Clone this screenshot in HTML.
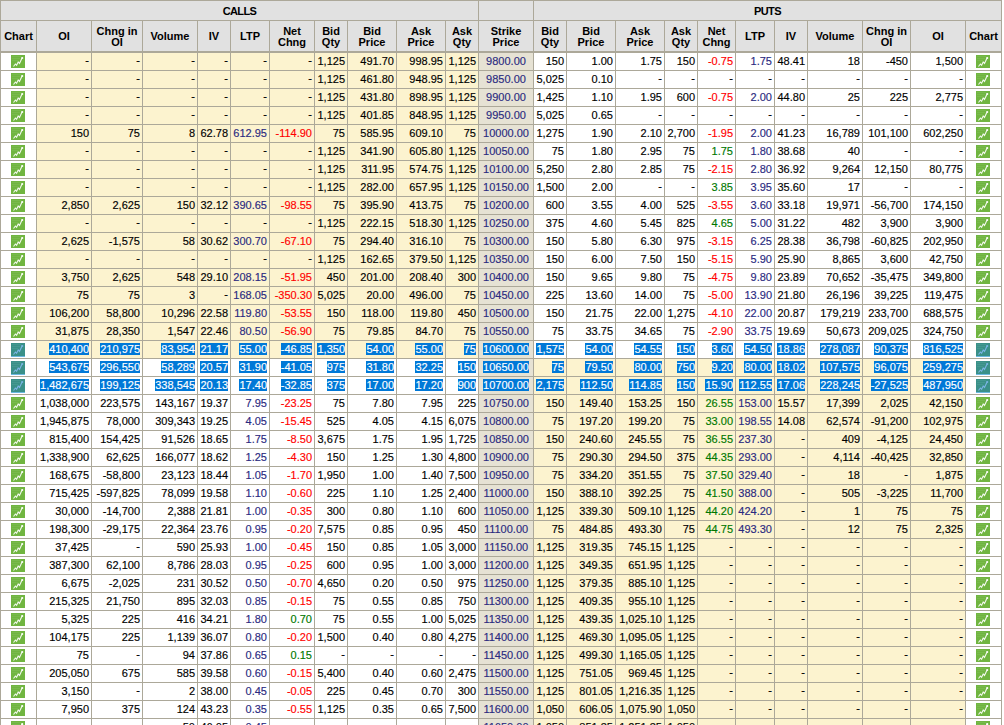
<!DOCTYPE html><html><head><meta charset="utf-8"><style>*{margin:0;padding:0}
html,body{width:1004px;height:725px;overflow:hidden;background:#fff}
#t{position:absolute;left:0;top:0;width:1002px;height:725px;background:#aca899;font-family:"Liberation Sans",sans-serif;font-size:11px;color:#000;overflow:hidden}
#t div{position:absolute}
.r{left:0;width:1002px;height:17px}
.c0{left:1px;width:35px}
.c1{left:37px;width:54px}
.c2{left:92px;width:50px}
.c3{left:143px;width:54px}
.c4{left:198px;width:32px}
.c5{left:231px;width:38px}
.c6{left:270px;width:44px}
.c7{left:315px;width:32px}
.c8{left:348px;width:48px}
.c9{left:397px;width:48px}
.c10{left:446px;width:32px}
.c11{left:479px;width:54px}
.c12{left:534px;width:32px}
.c13{left:567px;width:48px}
.c14{left:616px;width:48px}
.c15{left:665px;width:32px}
.c16{left:698px;width:37px}
.c17{left:736px;width:38px}
.c18{left:775px;width:32px}
.c19{left:808px;width:54px}
.c20{left:863px;width:47px}
.c21{left:911px;width:54px}
.c22{left:966px;width:35px}
.r div{-webkit-text-stroke:0.15px currentColor;top:0;height:17px;line-height:17px;text-align:right;padding-right:2px;box-sizing:border-box;background:#fff;white-space:nowrap}
.r .y{background:#fcf3cf}
.r .s{background:#e6e2d4;color:#2a2a80;text-align:center;padding:0}
.b{color:#2a2a80}.rd{color:#ff0000}.g{color:#007800}
.sel span{background:#0078d7;color:#fff}
.r .ic{padding:0}
.r .d{line-height:15px}
.ic b{position:absolute;left:10px;top:2px;width:14px;height:13px;background:#6db33f}
.ic svg{position:absolute;left:10px;top:2px}
.h{font-weight:bold;text-align:center;background:#e1e1e1}</style></head><body><div id="t">
<div class="h" style="left:1px;top:1px;width:477px;height:19px;line-height:21px;letter-spacing:-0.6px">CALLS</div>
<div class="h" style="left:479px;top:1px;width:54px;height:19px"></div>
<div class="h" style="left:534px;top:1px;width:467px;height:19px;line-height:21px;letter-spacing:-0.6px">PUTS</div>
<div class="h" style="left:1px;top:21px;width:35px;height:30px;line-height:30px">Chart</div>
<div class="h" style="left:37px;top:21px;width:54px;height:30px;line-height:30px">OI</div>
<div class="h" style="left:92px;top:21px;width:50px;height:30px;line-height:11px;padding-top:5px;box-sizing:border-box">Chng in<br>OI</div>
<div class="h" style="left:143px;top:21px;width:54px;height:30px;line-height:30px">Volume</div>
<div class="h" style="left:198px;top:21px;width:32px;height:30px;line-height:30px">IV</div>
<div class="h" style="left:231px;top:21px;width:38px;height:30px;line-height:30px">LTP</div>
<div class="h" style="left:270px;top:21px;width:44px;height:30px;line-height:11px;padding-top:5px;box-sizing:border-box">Net<br>Chng</div>
<div class="h" style="left:315px;top:21px;width:32px;height:30px;line-height:11px;padding-top:5px;box-sizing:border-box">Bid<br>Qty</div>
<div class="h" style="left:348px;top:21px;width:48px;height:30px;line-height:11px;padding-top:5px;box-sizing:border-box">Bid<br>Price</div>
<div class="h" style="left:397px;top:21px;width:48px;height:30px;line-height:11px;padding-top:5px;box-sizing:border-box">Ask<br>Price</div>
<div class="h" style="left:446px;top:21px;width:32px;height:30px;line-height:11px;padding-top:5px;box-sizing:border-box">Ask<br>Qty</div>
<div class="h" style="left:479px;top:21px;width:54px;height:30px;line-height:11px;padding-top:5px;box-sizing:border-box">Strike<br>Price</div>
<div class="h" style="left:534px;top:21px;width:32px;height:30px;line-height:11px;padding-top:5px;box-sizing:border-box">Bid<br>Qty</div>
<div class="h" style="left:567px;top:21px;width:48px;height:30px;line-height:11px;padding-top:5px;box-sizing:border-box">Bid<br>Price</div>
<div class="h" style="left:616px;top:21px;width:48px;height:30px;line-height:11px;padding-top:5px;box-sizing:border-box">Ask<br>Price</div>
<div class="h" style="left:665px;top:21px;width:32px;height:30px;line-height:11px;padding-top:5px;box-sizing:border-box">Ask<br>Qty</div>
<div class="h" style="left:698px;top:21px;width:37px;height:30px;line-height:11px;padding-top:5px;box-sizing:border-box">Net<br>Chng</div>
<div class="h" style="left:736px;top:21px;width:38px;height:30px;line-height:30px">LTP</div>
<div class="h" style="left:775px;top:21px;width:32px;height:30px;line-height:30px">IV</div>
<div class="h" style="left:808px;top:21px;width:54px;height:30px;line-height:30px">Volume</div>
<div class="h" style="left:863px;top:21px;width:47px;height:30px;line-height:11px;padding-top:5px;box-sizing:border-box">Chng in<br>OI</div>
<div class="h" style="left:911px;top:21px;width:54px;height:30px;line-height:30px">OI</div>
<div class="h" style="left:966px;top:21px;width:35px;height:30px;line-height:30px">Chart</div>
<div class="r" style="top:53px"><div class="c0 ic"><svg width="14" height="13"><rect width="14" height="13" fill="#70b540"/><path d="M1 1.5h9M1 3.5h8M1 5.5h6" stroke="#8bc666" stroke-width="1" opacity="0.35"/><path d="M2.5 11.5L4.4 9L5.6 10.3L7.2 7L8.5 8.5L10 5.2L11 3.2" fill="none" stroke="#fff" stroke-width="1.1" stroke-opacity="0.9"/><circle cx="11.2" cy="3" r="1.1" fill="#fff"/></svg></div><div class="c1 y d">-</div><div class="c2 y d">-</div><div class="c3 y d">-</div><div class="c4 y d">-</div><div class="c5 y d">-</div><div class="c6 y d">-</div><div class="c7 y">1,125</div><div class="c8 y">491.70</div><div class="c9 y">998.95</div><div class="c10 y">1,125</div><div class="c11 s">9800.00</div><div class="c12">150</div><div class="c13">1.00</div><div class="c14">1.75</div><div class="c15">150</div><div class="c16 rd">-0.75</div><div class="c17 b">1.75</div><div class="c18">48.41</div><div class="c19">18</div><div class="c20">-450</div><div class="c21">1,500</div><div class="c22 ic"><svg width="14" height="13"><rect width="14" height="13" fill="#70b540"/><path d="M1 1.5h9M1 3.5h8M1 5.5h6" stroke="#8bc666" stroke-width="1" opacity="0.35"/><path d="M2.5 11.5L4.4 9L5.6 10.3L7.2 7L8.5 8.5L10 5.2L11 3.2" fill="none" stroke="#fff" stroke-width="1.1" stroke-opacity="0.9"/><circle cx="11.2" cy="3" r="1.1" fill="#fff"/></svg></div></div>
<div class="r" style="top:71px"><div class="c0 ic"><svg width="14" height="13"><rect width="14" height="13" fill="#70b540"/><path d="M1 1.5h9M1 3.5h8M1 5.5h6" stroke="#8bc666" stroke-width="1" opacity="0.35"/><path d="M2.5 11.5L4.4 9L5.6 10.3L7.2 7L8.5 8.5L10 5.2L11 3.2" fill="none" stroke="#fff" stroke-width="1.1" stroke-opacity="0.9"/><circle cx="11.2" cy="3" r="1.1" fill="#fff"/></svg></div><div class="c1 y d">-</div><div class="c2 y d">-</div><div class="c3 y d">-</div><div class="c4 y d">-</div><div class="c5 y d">-</div><div class="c6 y d">-</div><div class="c7 y">1,125</div><div class="c8 y">461.80</div><div class="c9 y">948.95</div><div class="c10 y">1,125</div><div class="c11 s">9850.00</div><div class="c12">5,025</div><div class="c13">0.10</div><div class="c14 d">-</div><div class="c15 d">-</div><div class="c16 d">-</div><div class="c17 d">-</div><div class="c18 d">-</div><div class="c19 d">-</div><div class="c20 d">-</div><div class="c21 d">-</div><div class="c22 ic"><svg width="14" height="13"><rect width="14" height="13" fill="#70b540"/><path d="M1 1.5h9M1 3.5h8M1 5.5h6" stroke="#8bc666" stroke-width="1" opacity="0.35"/><path d="M2.5 11.5L4.4 9L5.6 10.3L7.2 7L8.5 8.5L10 5.2L11 3.2" fill="none" stroke="#fff" stroke-width="1.1" stroke-opacity="0.9"/><circle cx="11.2" cy="3" r="1.1" fill="#fff"/></svg></div></div>
<div class="r" style="top:89px"><div class="c0 ic"><svg width="14" height="13"><rect width="14" height="13" fill="#70b540"/><path d="M1 1.5h9M1 3.5h8M1 5.5h6" stroke="#8bc666" stroke-width="1" opacity="0.35"/><path d="M2.5 11.5L4.4 9L5.6 10.3L7.2 7L8.5 8.5L10 5.2L11 3.2" fill="none" stroke="#fff" stroke-width="1.1" stroke-opacity="0.9"/><circle cx="11.2" cy="3" r="1.1" fill="#fff"/></svg></div><div class="c1 y d">-</div><div class="c2 y d">-</div><div class="c3 y d">-</div><div class="c4 y d">-</div><div class="c5 y d">-</div><div class="c6 y d">-</div><div class="c7 y">1,125</div><div class="c8 y">431.80</div><div class="c9 y">898.95</div><div class="c10 y">1,125</div><div class="c11 s">9900.00</div><div class="c12">1,425</div><div class="c13">1.10</div><div class="c14">1.95</div><div class="c15">600</div><div class="c16 rd">-0.75</div><div class="c17 b">2.00</div><div class="c18">44.80</div><div class="c19">25</div><div class="c20">225</div><div class="c21">2,775</div><div class="c22 ic"><svg width="14" height="13"><rect width="14" height="13" fill="#70b540"/><path d="M1 1.5h9M1 3.5h8M1 5.5h6" stroke="#8bc666" stroke-width="1" opacity="0.35"/><path d="M2.5 11.5L4.4 9L5.6 10.3L7.2 7L8.5 8.5L10 5.2L11 3.2" fill="none" stroke="#fff" stroke-width="1.1" stroke-opacity="0.9"/><circle cx="11.2" cy="3" r="1.1" fill="#fff"/></svg></div></div>
<div class="r" style="top:107px"><div class="c0 ic"><svg width="14" height="13"><rect width="14" height="13" fill="#70b540"/><path d="M1 1.5h9M1 3.5h8M1 5.5h6" stroke="#8bc666" stroke-width="1" opacity="0.35"/><path d="M2.5 11.5L4.4 9L5.6 10.3L7.2 7L8.5 8.5L10 5.2L11 3.2" fill="none" stroke="#fff" stroke-width="1.1" stroke-opacity="0.9"/><circle cx="11.2" cy="3" r="1.1" fill="#fff"/></svg></div><div class="c1 y d">-</div><div class="c2 y d">-</div><div class="c3 y d">-</div><div class="c4 y d">-</div><div class="c5 y d">-</div><div class="c6 y d">-</div><div class="c7 y">1,125</div><div class="c8 y">401.85</div><div class="c9 y">848.95</div><div class="c10 y">1,125</div><div class="c11 s">9950.00</div><div class="c12">5,025</div><div class="c13">0.65</div><div class="c14 d">-</div><div class="c15 d">-</div><div class="c16 d">-</div><div class="c17 d">-</div><div class="c18 d">-</div><div class="c19 d">-</div><div class="c20 d">-</div><div class="c21 d">-</div><div class="c22 ic"><svg width="14" height="13"><rect width="14" height="13" fill="#70b540"/><path d="M1 1.5h9M1 3.5h8M1 5.5h6" stroke="#8bc666" stroke-width="1" opacity="0.35"/><path d="M2.5 11.5L4.4 9L5.6 10.3L7.2 7L8.5 8.5L10 5.2L11 3.2" fill="none" stroke="#fff" stroke-width="1.1" stroke-opacity="0.9"/><circle cx="11.2" cy="3" r="1.1" fill="#fff"/></svg></div></div>
<div class="r" style="top:125px"><div class="c0 ic"><svg width="14" height="13"><rect width="14" height="13" fill="#70b540"/><path d="M1 1.5h9M1 3.5h8M1 5.5h6" stroke="#8bc666" stroke-width="1" opacity="0.35"/><path d="M2.5 11.5L4.4 9L5.6 10.3L7.2 7L8.5 8.5L10 5.2L11 3.2" fill="none" stroke="#fff" stroke-width="1.1" stroke-opacity="0.9"/><circle cx="11.2" cy="3" r="1.1" fill="#fff"/></svg></div><div class="c1 y">150</div><div class="c2 y">75</div><div class="c3 y">8</div><div class="c4 y">62.78</div><div class="c5 y b">612.95</div><div class="c6 y rd">-114.90</div><div class="c7 y">75</div><div class="c8 y">585.95</div><div class="c9 y">609.10</div><div class="c10 y">75</div><div class="c11 s">10000.00</div><div class="c12">1,275</div><div class="c13">1.90</div><div class="c14">2.10</div><div class="c15">2,700</div><div class="c16 rd">-1.95</div><div class="c17 b">2.00</div><div class="c18">41.23</div><div class="c19">16,789</div><div class="c20">101,100</div><div class="c21">602,250</div><div class="c22 ic"><svg width="14" height="13"><rect width="14" height="13" fill="#70b540"/><path d="M1 1.5h9M1 3.5h8M1 5.5h6" stroke="#8bc666" stroke-width="1" opacity="0.35"/><path d="M2.5 11.5L4.4 9L5.6 10.3L7.2 7L8.5 8.5L10 5.2L11 3.2" fill="none" stroke="#fff" stroke-width="1.1" stroke-opacity="0.9"/><circle cx="11.2" cy="3" r="1.1" fill="#fff"/></svg></div></div>
<div class="r" style="top:143px"><div class="c0 ic"><svg width="14" height="13"><rect width="14" height="13" fill="#70b540"/><path d="M1 1.5h9M1 3.5h8M1 5.5h6" stroke="#8bc666" stroke-width="1" opacity="0.35"/><path d="M2.5 11.5L4.4 9L5.6 10.3L7.2 7L8.5 8.5L10 5.2L11 3.2" fill="none" stroke="#fff" stroke-width="1.1" stroke-opacity="0.9"/><circle cx="11.2" cy="3" r="1.1" fill="#fff"/></svg></div><div class="c1 y d">-</div><div class="c2 y d">-</div><div class="c3 y d">-</div><div class="c4 y d">-</div><div class="c5 y d">-</div><div class="c6 y d">-</div><div class="c7 y">1,125</div><div class="c8 y">341.90</div><div class="c9 y">605.80</div><div class="c10 y">1,125</div><div class="c11 s">10050.00</div><div class="c12">75</div><div class="c13">1.80</div><div class="c14">2.95</div><div class="c15">75</div><div class="c16 g">1.75</div><div class="c17 b">1.80</div><div class="c18">38.68</div><div class="c19">40</div><div class="c20 d">-</div><div class="c21 d">-</div><div class="c22 ic"><svg width="14" height="13"><rect width="14" height="13" fill="#70b540"/><path d="M1 1.5h9M1 3.5h8M1 5.5h6" stroke="#8bc666" stroke-width="1" opacity="0.35"/><path d="M2.5 11.5L4.4 9L5.6 10.3L7.2 7L8.5 8.5L10 5.2L11 3.2" fill="none" stroke="#fff" stroke-width="1.1" stroke-opacity="0.9"/><circle cx="11.2" cy="3" r="1.1" fill="#fff"/></svg></div></div>
<div class="r" style="top:161px"><div class="c0 ic"><svg width="14" height="13"><rect width="14" height="13" fill="#70b540"/><path d="M1 1.5h9M1 3.5h8M1 5.5h6" stroke="#8bc666" stroke-width="1" opacity="0.35"/><path d="M2.5 11.5L4.4 9L5.6 10.3L7.2 7L8.5 8.5L10 5.2L11 3.2" fill="none" stroke="#fff" stroke-width="1.1" stroke-opacity="0.9"/><circle cx="11.2" cy="3" r="1.1" fill="#fff"/></svg></div><div class="c1 y d">-</div><div class="c2 y d">-</div><div class="c3 y d">-</div><div class="c4 y d">-</div><div class="c5 y d">-</div><div class="c6 y d">-</div><div class="c7 y">1,125</div><div class="c8 y">311.95</div><div class="c9 y">574.75</div><div class="c10 y">1,125</div><div class="c11 s">10100.00</div><div class="c12">5,250</div><div class="c13">2.80</div><div class="c14">2.85</div><div class="c15">75</div><div class="c16 rd">-2.15</div><div class="c17 b">2.80</div><div class="c18">36.92</div><div class="c19">9,264</div><div class="c20">12,150</div><div class="c21">80,775</div><div class="c22 ic"><svg width="14" height="13"><rect width="14" height="13" fill="#70b540"/><path d="M1 1.5h9M1 3.5h8M1 5.5h6" stroke="#8bc666" stroke-width="1" opacity="0.35"/><path d="M2.5 11.5L4.4 9L5.6 10.3L7.2 7L8.5 8.5L10 5.2L11 3.2" fill="none" stroke="#fff" stroke-width="1.1" stroke-opacity="0.9"/><circle cx="11.2" cy="3" r="1.1" fill="#fff"/></svg></div></div>
<div class="r" style="top:179px"><div class="c0 ic"><svg width="14" height="13"><rect width="14" height="13" fill="#70b540"/><path d="M1 1.5h9M1 3.5h8M1 5.5h6" stroke="#8bc666" stroke-width="1" opacity="0.35"/><path d="M2.5 11.5L4.4 9L5.6 10.3L7.2 7L8.5 8.5L10 5.2L11 3.2" fill="none" stroke="#fff" stroke-width="1.1" stroke-opacity="0.9"/><circle cx="11.2" cy="3" r="1.1" fill="#fff"/></svg></div><div class="c1 y d">-</div><div class="c2 y d">-</div><div class="c3 y d">-</div><div class="c4 y d">-</div><div class="c5 y d">-</div><div class="c6 y d">-</div><div class="c7 y">1,125</div><div class="c8 y">282.00</div><div class="c9 y">657.95</div><div class="c10 y">1,125</div><div class="c11 s">10150.00</div><div class="c12">1,500</div><div class="c13">2.00</div><div class="c14 d">-</div><div class="c15 d">-</div><div class="c16 g">3.85</div><div class="c17 b">3.95</div><div class="c18">35.60</div><div class="c19">17</div><div class="c20 d">-</div><div class="c21 d">-</div><div class="c22 ic"><svg width="14" height="13"><rect width="14" height="13" fill="#70b540"/><path d="M1 1.5h9M1 3.5h8M1 5.5h6" stroke="#8bc666" stroke-width="1" opacity="0.35"/><path d="M2.5 11.5L4.4 9L5.6 10.3L7.2 7L8.5 8.5L10 5.2L11 3.2" fill="none" stroke="#fff" stroke-width="1.1" stroke-opacity="0.9"/><circle cx="11.2" cy="3" r="1.1" fill="#fff"/></svg></div></div>
<div class="r" style="top:197px"><div class="c0 ic"><svg width="14" height="13"><rect width="14" height="13" fill="#70b540"/><path d="M1 1.5h9M1 3.5h8M1 5.5h6" stroke="#8bc666" stroke-width="1" opacity="0.35"/><path d="M2.5 11.5L4.4 9L5.6 10.3L7.2 7L8.5 8.5L10 5.2L11 3.2" fill="none" stroke="#fff" stroke-width="1.1" stroke-opacity="0.9"/><circle cx="11.2" cy="3" r="1.1" fill="#fff"/></svg></div><div class="c1 y">2,850</div><div class="c2 y">2,625</div><div class="c3 y">150</div><div class="c4 y">32.12</div><div class="c5 y b">390.65</div><div class="c6 y rd">-98.55</div><div class="c7 y">75</div><div class="c8 y">395.90</div><div class="c9 y">413.75</div><div class="c10 y">75</div><div class="c11 s">10200.00</div><div class="c12">600</div><div class="c13">3.55</div><div class="c14">4.00</div><div class="c15">525</div><div class="c16 rd">-3.55</div><div class="c17 b">3.60</div><div class="c18">33.18</div><div class="c19">19,971</div><div class="c20">-56,700</div><div class="c21">174,150</div><div class="c22 ic"><svg width="14" height="13"><rect width="14" height="13" fill="#70b540"/><path d="M1 1.5h9M1 3.5h8M1 5.5h6" stroke="#8bc666" stroke-width="1" opacity="0.35"/><path d="M2.5 11.5L4.4 9L5.6 10.3L7.2 7L8.5 8.5L10 5.2L11 3.2" fill="none" stroke="#fff" stroke-width="1.1" stroke-opacity="0.9"/><circle cx="11.2" cy="3" r="1.1" fill="#fff"/></svg></div></div>
<div class="r" style="top:215px"><div class="c0 ic"><svg width="14" height="13"><rect width="14" height="13" fill="#70b540"/><path d="M1 1.5h9M1 3.5h8M1 5.5h6" stroke="#8bc666" stroke-width="1" opacity="0.35"/><path d="M2.5 11.5L4.4 9L5.6 10.3L7.2 7L8.5 8.5L10 5.2L11 3.2" fill="none" stroke="#fff" stroke-width="1.1" stroke-opacity="0.9"/><circle cx="11.2" cy="3" r="1.1" fill="#fff"/></svg></div><div class="c1 y d">-</div><div class="c2 y d">-</div><div class="c3 y d">-</div><div class="c4 y d">-</div><div class="c5 y d">-</div><div class="c6 y d">-</div><div class="c7 y">1,125</div><div class="c8 y">222.15</div><div class="c9 y">518.30</div><div class="c10 y">1,125</div><div class="c11 s">10250.00</div><div class="c12">375</div><div class="c13">4.60</div><div class="c14">5.45</div><div class="c15">825</div><div class="c16 g">4.65</div><div class="c17 b">5.00</div><div class="c18">31.22</div><div class="c19">482</div><div class="c20">3,900</div><div class="c21">3,900</div><div class="c22 ic"><svg width="14" height="13"><rect width="14" height="13" fill="#70b540"/><path d="M1 1.5h9M1 3.5h8M1 5.5h6" stroke="#8bc666" stroke-width="1" opacity="0.35"/><path d="M2.5 11.5L4.4 9L5.6 10.3L7.2 7L8.5 8.5L10 5.2L11 3.2" fill="none" stroke="#fff" stroke-width="1.1" stroke-opacity="0.9"/><circle cx="11.2" cy="3" r="1.1" fill="#fff"/></svg></div></div>
<div class="r" style="top:233px"><div class="c0 ic"><svg width="14" height="13"><rect width="14" height="13" fill="#70b540"/><path d="M1 1.5h9M1 3.5h8M1 5.5h6" stroke="#8bc666" stroke-width="1" opacity="0.35"/><path d="M2.5 11.5L4.4 9L5.6 10.3L7.2 7L8.5 8.5L10 5.2L11 3.2" fill="none" stroke="#fff" stroke-width="1.1" stroke-opacity="0.9"/><circle cx="11.2" cy="3" r="1.1" fill="#fff"/></svg></div><div class="c1 y">2,625</div><div class="c2 y">-1,575</div><div class="c3 y">58</div><div class="c4 y">30.62</div><div class="c5 y b">300.70</div><div class="c6 y rd">-67.10</div><div class="c7 y">75</div><div class="c8 y">294.40</div><div class="c9 y">316.10</div><div class="c10 y">75</div><div class="c11 s">10300.00</div><div class="c12">150</div><div class="c13">5.80</div><div class="c14">6.30</div><div class="c15">975</div><div class="c16 rd">-3.15</div><div class="c17 b">6.25</div><div class="c18">28.38</div><div class="c19">36,798</div><div class="c20">-60,825</div><div class="c21">202,950</div><div class="c22 ic"><svg width="14" height="13"><rect width="14" height="13" fill="#70b540"/><path d="M1 1.5h9M1 3.5h8M1 5.5h6" stroke="#8bc666" stroke-width="1" opacity="0.35"/><path d="M2.5 11.5L4.4 9L5.6 10.3L7.2 7L8.5 8.5L10 5.2L11 3.2" fill="none" stroke="#fff" stroke-width="1.1" stroke-opacity="0.9"/><circle cx="11.2" cy="3" r="1.1" fill="#fff"/></svg></div></div>
<div class="r" style="top:251px"><div class="c0 ic"><svg width="14" height="13"><rect width="14" height="13" fill="#70b540"/><path d="M1 1.5h9M1 3.5h8M1 5.5h6" stroke="#8bc666" stroke-width="1" opacity="0.35"/><path d="M2.5 11.5L4.4 9L5.6 10.3L7.2 7L8.5 8.5L10 5.2L11 3.2" fill="none" stroke="#fff" stroke-width="1.1" stroke-opacity="0.9"/><circle cx="11.2" cy="3" r="1.1" fill="#fff"/></svg></div><div class="c1 y d">-</div><div class="c2 y d">-</div><div class="c3 y d">-</div><div class="c4 y d">-</div><div class="c5 y d">-</div><div class="c6 y d">-</div><div class="c7 y">1,125</div><div class="c8 y">162.65</div><div class="c9 y">379.50</div><div class="c10 y">1,125</div><div class="c11 s">10350.00</div><div class="c12">150</div><div class="c13">6.00</div><div class="c14">7.50</div><div class="c15">150</div><div class="c16 rd">-5.15</div><div class="c17 b">5.90</div><div class="c18">25.90</div><div class="c19">8,865</div><div class="c20">3,600</div><div class="c21">42,750</div><div class="c22 ic"><svg width="14" height="13"><rect width="14" height="13" fill="#70b540"/><path d="M1 1.5h9M1 3.5h8M1 5.5h6" stroke="#8bc666" stroke-width="1" opacity="0.35"/><path d="M2.5 11.5L4.4 9L5.6 10.3L7.2 7L8.5 8.5L10 5.2L11 3.2" fill="none" stroke="#fff" stroke-width="1.1" stroke-opacity="0.9"/><circle cx="11.2" cy="3" r="1.1" fill="#fff"/></svg></div></div>
<div class="r" style="top:269px"><div class="c0 ic"><svg width="14" height="13"><rect width="14" height="13" fill="#70b540"/><path d="M1 1.5h9M1 3.5h8M1 5.5h6" stroke="#8bc666" stroke-width="1" opacity="0.35"/><path d="M2.5 11.5L4.4 9L5.6 10.3L7.2 7L8.5 8.5L10 5.2L11 3.2" fill="none" stroke="#fff" stroke-width="1.1" stroke-opacity="0.9"/><circle cx="11.2" cy="3" r="1.1" fill="#fff"/></svg></div><div class="c1 y">3,750</div><div class="c2 y">2,625</div><div class="c3 y">548</div><div class="c4 y">29.10</div><div class="c5 y b">208.15</div><div class="c6 y rd">-51.95</div><div class="c7 y">450</div><div class="c8 y">201.00</div><div class="c9 y">208.40</div><div class="c10 y">300</div><div class="c11 s">10400.00</div><div class="c12">150</div><div class="c13">9.65</div><div class="c14">9.80</div><div class="c15">75</div><div class="c16 rd">-4.75</div><div class="c17 b">9.80</div><div class="c18">23.89</div><div class="c19">70,652</div><div class="c20">-35,475</div><div class="c21">349,800</div><div class="c22 ic"><svg width="14" height="13"><rect width="14" height="13" fill="#70b540"/><path d="M1 1.5h9M1 3.5h8M1 5.5h6" stroke="#8bc666" stroke-width="1" opacity="0.35"/><path d="M2.5 11.5L4.4 9L5.6 10.3L7.2 7L8.5 8.5L10 5.2L11 3.2" fill="none" stroke="#fff" stroke-width="1.1" stroke-opacity="0.9"/><circle cx="11.2" cy="3" r="1.1" fill="#fff"/></svg></div></div>
<div class="r" style="top:287px"><div class="c0 ic"><svg width="14" height="13"><rect width="14" height="13" fill="#70b540"/><path d="M1 1.5h9M1 3.5h8M1 5.5h6" stroke="#8bc666" stroke-width="1" opacity="0.35"/><path d="M2.5 11.5L4.4 9L5.6 10.3L7.2 7L8.5 8.5L10 5.2L11 3.2" fill="none" stroke="#fff" stroke-width="1.1" stroke-opacity="0.9"/><circle cx="11.2" cy="3" r="1.1" fill="#fff"/></svg></div><div class="c1 y">75</div><div class="c2 y">75</div><div class="c3 y">3</div><div class="c4 y d">-</div><div class="c5 y b">168.05</div><div class="c6 y rd">-350.30</div><div class="c7 y">5,025</div><div class="c8 y">20.00</div><div class="c9 y">496.00</div><div class="c10 y">75</div><div class="c11 s">10450.00</div><div class="c12">225</div><div class="c13">13.60</div><div class="c14">14.00</div><div class="c15">75</div><div class="c16 rd">-5.00</div><div class="c17 b">13.90</div><div class="c18">21.80</div><div class="c19">26,196</div><div class="c20">39,225</div><div class="c21">119,475</div><div class="c22 ic"><svg width="14" height="13"><rect width="14" height="13" fill="#70b540"/><path d="M1 1.5h9M1 3.5h8M1 5.5h6" stroke="#8bc666" stroke-width="1" opacity="0.35"/><path d="M2.5 11.5L4.4 9L5.6 10.3L7.2 7L8.5 8.5L10 5.2L11 3.2" fill="none" stroke="#fff" stroke-width="1.1" stroke-opacity="0.9"/><circle cx="11.2" cy="3" r="1.1" fill="#fff"/></svg></div></div>
<div class="r" style="top:305px"><div class="c0 ic"><svg width="14" height="13"><rect width="14" height="13" fill="#70b540"/><path d="M1 1.5h9M1 3.5h8M1 5.5h6" stroke="#8bc666" stroke-width="1" opacity="0.35"/><path d="M2.5 11.5L4.4 9L5.6 10.3L7.2 7L8.5 8.5L10 5.2L11 3.2" fill="none" stroke="#fff" stroke-width="1.1" stroke-opacity="0.9"/><circle cx="11.2" cy="3" r="1.1" fill="#fff"/></svg></div><div class="c1 y">106,200</div><div class="c2 y">58,800</div><div class="c3 y">10,296</div><div class="c4 y">22.58</div><div class="c5 y b">119.80</div><div class="c6 y rd">-53.55</div><div class="c7 y">150</div><div class="c8 y">118.00</div><div class="c9 y">119.80</div><div class="c10 y">450</div><div class="c11 s">10500.00</div><div class="c12">150</div><div class="c13">21.75</div><div class="c14">22.00</div><div class="c15">1,275</div><div class="c16 rd">-4.10</div><div class="c17 b">22.00</div><div class="c18">20.87</div><div class="c19">179,219</div><div class="c20">233,700</div><div class="c21">688,575</div><div class="c22 ic"><svg width="14" height="13"><rect width="14" height="13" fill="#70b540"/><path d="M1 1.5h9M1 3.5h8M1 5.5h6" stroke="#8bc666" stroke-width="1" opacity="0.35"/><path d="M2.5 11.5L4.4 9L5.6 10.3L7.2 7L8.5 8.5L10 5.2L11 3.2" fill="none" stroke="#fff" stroke-width="1.1" stroke-opacity="0.9"/><circle cx="11.2" cy="3" r="1.1" fill="#fff"/></svg></div></div>
<div class="r" style="top:323px"><div class="c0 ic"><svg width="14" height="13"><rect width="14" height="13" fill="#70b540"/><path d="M1 1.5h9M1 3.5h8M1 5.5h6" stroke="#8bc666" stroke-width="1" opacity="0.35"/><path d="M2.5 11.5L4.4 9L5.6 10.3L7.2 7L8.5 8.5L10 5.2L11 3.2" fill="none" stroke="#fff" stroke-width="1.1" stroke-opacity="0.9"/><circle cx="11.2" cy="3" r="1.1" fill="#fff"/></svg></div><div class="c1 y">31,875</div><div class="c2 y">28,350</div><div class="c3 y">1,547</div><div class="c4 y">22.46</div><div class="c5 y b">80.50</div><div class="c6 y rd">-56.90</div><div class="c7 y">75</div><div class="c8 y">79.85</div><div class="c9 y">84.70</div><div class="c10 y">75</div><div class="c11 s">10550.00</div><div class="c12">75</div><div class="c13">33.75</div><div class="c14">34.65</div><div class="c15">75</div><div class="c16 rd">-2.90</div><div class="c17 b">33.75</div><div class="c18">19.69</div><div class="c19">50,673</div><div class="c20">209,025</div><div class="c21">324,750</div><div class="c22 ic"><svg width="14" height="13"><rect width="14" height="13" fill="#70b540"/><path d="M1 1.5h9M1 3.5h8M1 5.5h6" stroke="#8bc666" stroke-width="1" opacity="0.35"/><path d="M2.5 11.5L4.4 9L5.6 10.3L7.2 7L8.5 8.5L10 5.2L11 3.2" fill="none" stroke="#fff" stroke-width="1.1" stroke-opacity="0.9"/><circle cx="11.2" cy="3" r="1.1" fill="#fff"/></svg></div></div>
<div class="r sel" style="top:341px"><div class="c0 ic"><svg width="14" height="14"><rect width="14" height="13" fill="#3a9088"/><path d="M1 1.5h9M1 3.5h8M1 5.5h6" stroke="#5aa8a0" stroke-width="1" opacity="0.35"/><path d="M2.5 11.5L4.4 9L5.6 10.3L7.2 7L8.5 8.5L10 5.2L11 3.2" fill="none" stroke="#7ab4e4" stroke-width="1.1"/><circle cx="11.2" cy="3" r="1.1" fill="#7ab4e4"/><rect y="13" width="14" height="1" fill="#6ab8e0"/></svg></div><div class="c1 y"><span>410,400</span></div><div class="c2 y"><span>210,975</span></div><div class="c3 y"><span>83,954</span></div><div class="c4 y"><span>21.17</span></div><div class="c5 y b"><span>55.00</span></div><div class="c6 y rd"><span>-46.85</span></div><div class="c7 y"><span>1,350</span></div><div class="c8 y"><span>54.00</span></div><div class="c9 y"><span>55.00</span></div><div class="c10 y"><span>75</span></div><div class="c11 s"><span>10600.00</span></div><div class="c12"><span>1,575</span></div><div class="c13"><span>54.00</span></div><div class="c14"><span>54.55</span></div><div class="c15"><span>150</span></div><div class="c16 g"><span>3.60</span></div><div class="c17 b"><span>54.50</span></div><div class="c18"><span>18.86</span></div><div class="c19"><span>278,087</span></div><div class="c20"><span>90,375</span></div><div class="c21"><span>816,525</span></div><div class="c22 ic"><svg width="14" height="14"><rect width="14" height="13" fill="#3a9088"/><path d="M1 1.5h9M1 3.5h8M1 5.5h6" stroke="#5aa8a0" stroke-width="1" opacity="0.35"/><path d="M2.5 11.5L4.4 9L5.6 10.3L7.2 7L8.5 8.5L10 5.2L11 3.2" fill="none" stroke="#7ab4e4" stroke-width="1.1"/><circle cx="11.2" cy="3" r="1.1" fill="#7ab4e4"/><rect y="13" width="14" height="1" fill="#6ab8e0"/></svg></div></div>
<div class="r sel" style="top:359px"><div class="c0 ic"><svg width="14" height="14"><rect width="14" height="13" fill="#3a9088"/><path d="M1 1.5h9M1 3.5h8M1 5.5h6" stroke="#5aa8a0" stroke-width="1" opacity="0.35"/><path d="M2.5 11.5L4.4 9L5.6 10.3L7.2 7L8.5 8.5L10 5.2L11 3.2" fill="none" stroke="#7ab4e4" stroke-width="1.1"/><circle cx="11.2" cy="3" r="1.1" fill="#7ab4e4"/><rect y="13" width="14" height="1" fill="#6ab8e0"/></svg></div><div class="c1"><span>543,675</span></div><div class="c2"><span>296,550</span></div><div class="c3"><span>58,289</span></div><div class="c4"><span>20.57</span></div><div class="c5 b"><span>31.90</span></div><div class="c6 rd"><span>-41.05</span></div><div class="c7"><span>975</span></div><div class="c8"><span>31.80</span></div><div class="c9"><span>32.25</span></div><div class="c10"><span>150</span></div><div class="c11 s"><span>10650.00</span></div><div class="c12 y"><span>75</span></div><div class="c13 y"><span>79.50</span></div><div class="c14 y"><span>80.00</span></div><div class="c15 y"><span>750</span></div><div class="c16 y g"><span>9.20</span></div><div class="c17 y b"><span>80.00</span></div><div class="c18 y"><span>18.02</span></div><div class="c19 y"><span>107,575</span></div><div class="c20 y"><span>96,075</span></div><div class="c21 y"><span>259,275</span></div><div class="c22 ic"><svg width="14" height="14"><rect width="14" height="13" fill="#3a9088"/><path d="M1 1.5h9M1 3.5h8M1 5.5h6" stroke="#5aa8a0" stroke-width="1" opacity="0.35"/><path d="M2.5 11.5L4.4 9L5.6 10.3L7.2 7L8.5 8.5L10 5.2L11 3.2" fill="none" stroke="#7ab4e4" stroke-width="1.1"/><circle cx="11.2" cy="3" r="1.1" fill="#7ab4e4"/><rect y="13" width="14" height="1" fill="#6ab8e0"/></svg></div></div>
<div class="r sel" style="top:377px"><div class="c0 ic"><svg width="14" height="14"><rect width="14" height="13" fill="#3a9088"/><path d="M1 1.5h9M1 3.5h8M1 5.5h6" stroke="#5aa8a0" stroke-width="1" opacity="0.35"/><path d="M2.5 11.5L4.4 9L5.6 10.3L7.2 7L8.5 8.5L10 5.2L11 3.2" fill="none" stroke="#7ab4e4" stroke-width="1.1"/><circle cx="11.2" cy="3" r="1.1" fill="#7ab4e4"/><rect y="13" width="14" height="1" fill="#6ab8e0"/></svg></div><div class="c1"><span>1,482,675</span></div><div class="c2"><span>199,125</span></div><div class="c3"><span>338,545</span></div><div class="c4"><span>20.13</span></div><div class="c5 b"><span>17.40</span></div><div class="c6 rd"><span>-32.85</span></div><div class="c7"><span>375</span></div><div class="c8"><span>17.00</span></div><div class="c9"><span>17.20</span></div><div class="c10"><span>900</span></div><div class="c11 s"><span>10700.00</span></div><div class="c12 y"><span>2,175</span></div><div class="c13 y"><span>112.50</span></div><div class="c14 y"><span>114.85</span></div><div class="c15 y"><span>150</span></div><div class="c16 y g"><span>15.90</span></div><div class="c17 y b"><span>112.55</span></div><div class="c18 y"><span>17.06</span></div><div class="c19 y"><span>228,245</span></div><div class="c20 y"><span>-27,525</span></div><div class="c21 y"><span>487,950</span></div><div class="c22 ic"><svg width="14" height="14"><rect width="14" height="13" fill="#3a9088"/><path d="M1 1.5h9M1 3.5h8M1 5.5h6" stroke="#5aa8a0" stroke-width="1" opacity="0.35"/><path d="M2.5 11.5L4.4 9L5.6 10.3L7.2 7L8.5 8.5L10 5.2L11 3.2" fill="none" stroke="#7ab4e4" stroke-width="1.1"/><circle cx="11.2" cy="3" r="1.1" fill="#7ab4e4"/><rect y="13" width="14" height="1" fill="#6ab8e0"/></svg></div></div>
<div class="r" style="top:395px"><div class="c0 ic"><svg width="14" height="13"><rect width="14" height="13" fill="#70b540"/><path d="M1 1.5h9M1 3.5h8M1 5.5h6" stroke="#8bc666" stroke-width="1" opacity="0.35"/><path d="M2.5 11.5L4.4 9L5.6 10.3L7.2 7L8.5 8.5L10 5.2L11 3.2" fill="none" stroke="#fff" stroke-width="1.1" stroke-opacity="0.9"/><circle cx="11.2" cy="3" r="1.1" fill="#fff"/></svg></div><div class="c1">1,038,000</div><div class="c2">223,575</div><div class="c3">143,167</div><div class="c4">19.37</div><div class="c5 b">7.95</div><div class="c6 rd">-23.25</div><div class="c7">75</div><div class="c8">7.80</div><div class="c9">7.95</div><div class="c10">225</div><div class="c11 s">10750.00</div><div class="c12 y">150</div><div class="c13 y">149.40</div><div class="c14 y">153.25</div><div class="c15 y">150</div><div class="c16 y g">26.55</div><div class="c17 y b">153.00</div><div class="c18 y">15.57</div><div class="c19 y">17,399</div><div class="c20 y">2,025</div><div class="c21 y">42,150</div><div class="c22 ic"><svg width="14" height="13"><rect width="14" height="13" fill="#70b540"/><path d="M1 1.5h9M1 3.5h8M1 5.5h6" stroke="#8bc666" stroke-width="1" opacity="0.35"/><path d="M2.5 11.5L4.4 9L5.6 10.3L7.2 7L8.5 8.5L10 5.2L11 3.2" fill="none" stroke="#fff" stroke-width="1.1" stroke-opacity="0.9"/><circle cx="11.2" cy="3" r="1.1" fill="#fff"/></svg></div></div>
<div class="r" style="top:413px"><div class="c0 ic"><svg width="14" height="13"><rect width="14" height="13" fill="#70b540"/><path d="M1 1.5h9M1 3.5h8M1 5.5h6" stroke="#8bc666" stroke-width="1" opacity="0.35"/><path d="M2.5 11.5L4.4 9L5.6 10.3L7.2 7L8.5 8.5L10 5.2L11 3.2" fill="none" stroke="#fff" stroke-width="1.1" stroke-opacity="0.9"/><circle cx="11.2" cy="3" r="1.1" fill="#fff"/></svg></div><div class="c1">1,945,875</div><div class="c2">78,000</div><div class="c3">309,343</div><div class="c4">19.25</div><div class="c5 b">4.05</div><div class="c6 rd">-15.45</div><div class="c7">525</div><div class="c8">4.05</div><div class="c9">4.15</div><div class="c10">6,075</div><div class="c11 s">10800.00</div><div class="c12 y">75</div><div class="c13 y">197.20</div><div class="c14 y">199.20</div><div class="c15 y">75</div><div class="c16 y g">33.00</div><div class="c17 y b">198.55</div><div class="c18 y">14.08</div><div class="c19 y">62,574</div><div class="c20 y">-91,200</div><div class="c21 y">102,975</div><div class="c22 ic"><svg width="14" height="13"><rect width="14" height="13" fill="#70b540"/><path d="M1 1.5h9M1 3.5h8M1 5.5h6" stroke="#8bc666" stroke-width="1" opacity="0.35"/><path d="M2.5 11.5L4.4 9L5.6 10.3L7.2 7L8.5 8.5L10 5.2L11 3.2" fill="none" stroke="#fff" stroke-width="1.1" stroke-opacity="0.9"/><circle cx="11.2" cy="3" r="1.1" fill="#fff"/></svg></div></div>
<div class="r" style="top:431px"><div class="c0 ic"><svg width="14" height="13"><rect width="14" height="13" fill="#70b540"/><path d="M1 1.5h9M1 3.5h8M1 5.5h6" stroke="#8bc666" stroke-width="1" opacity="0.35"/><path d="M2.5 11.5L4.4 9L5.6 10.3L7.2 7L8.5 8.5L10 5.2L11 3.2" fill="none" stroke="#fff" stroke-width="1.1" stroke-opacity="0.9"/><circle cx="11.2" cy="3" r="1.1" fill="#fff"/></svg></div><div class="c1">815,400</div><div class="c2">154,425</div><div class="c3">91,526</div><div class="c4">18.65</div><div class="c5 b">1.75</div><div class="c6 rd">-8.50</div><div class="c7">3,675</div><div class="c8">1.75</div><div class="c9">1.95</div><div class="c10">1,725</div><div class="c11 s">10850.00</div><div class="c12 y">150</div><div class="c13 y">240.60</div><div class="c14 y">245.55</div><div class="c15 y">75</div><div class="c16 y g">36.55</div><div class="c17 y b">237.30</div><div class="c18 y d">-</div><div class="c19 y">409</div><div class="c20 y">-4,125</div><div class="c21 y">24,450</div><div class="c22 ic"><svg width="14" height="13"><rect width="14" height="13" fill="#70b540"/><path d="M1 1.5h9M1 3.5h8M1 5.5h6" stroke="#8bc666" stroke-width="1" opacity="0.35"/><path d="M2.5 11.5L4.4 9L5.6 10.3L7.2 7L8.5 8.5L10 5.2L11 3.2" fill="none" stroke="#fff" stroke-width="1.1" stroke-opacity="0.9"/><circle cx="11.2" cy="3" r="1.1" fill="#fff"/></svg></div></div>
<div class="r" style="top:449px"><div class="c0 ic"><svg width="14" height="13"><rect width="14" height="13" fill="#70b540"/><path d="M1 1.5h9M1 3.5h8M1 5.5h6" stroke="#8bc666" stroke-width="1" opacity="0.35"/><path d="M2.5 11.5L4.4 9L5.6 10.3L7.2 7L8.5 8.5L10 5.2L11 3.2" fill="none" stroke="#fff" stroke-width="1.1" stroke-opacity="0.9"/><circle cx="11.2" cy="3" r="1.1" fill="#fff"/></svg></div><div class="c1">1,338,900</div><div class="c2">62,625</div><div class="c3">166,077</div><div class="c4">18.62</div><div class="c5 b">1.25</div><div class="c6 rd">-4.30</div><div class="c7">150</div><div class="c8">1.25</div><div class="c9">1.30</div><div class="c10">4,800</div><div class="c11 s">10900.00</div><div class="c12 y">75</div><div class="c13 y">290.30</div><div class="c14 y">294.50</div><div class="c15 y">375</div><div class="c16 y g">44.35</div><div class="c17 y b">293.00</div><div class="c18 y d">-</div><div class="c19 y">4,114</div><div class="c20 y">-40,425</div><div class="c21 y">32,850</div><div class="c22 ic"><svg width="14" height="13"><rect width="14" height="13" fill="#70b540"/><path d="M1 1.5h9M1 3.5h8M1 5.5h6" stroke="#8bc666" stroke-width="1" opacity="0.35"/><path d="M2.5 11.5L4.4 9L5.6 10.3L7.2 7L8.5 8.5L10 5.2L11 3.2" fill="none" stroke="#fff" stroke-width="1.1" stroke-opacity="0.9"/><circle cx="11.2" cy="3" r="1.1" fill="#fff"/></svg></div></div>
<div class="r" style="top:467px"><div class="c0 ic"><svg width="14" height="13"><rect width="14" height="13" fill="#70b540"/><path d="M1 1.5h9M1 3.5h8M1 5.5h6" stroke="#8bc666" stroke-width="1" opacity="0.35"/><path d="M2.5 11.5L4.4 9L5.6 10.3L7.2 7L8.5 8.5L10 5.2L11 3.2" fill="none" stroke="#fff" stroke-width="1.1" stroke-opacity="0.9"/><circle cx="11.2" cy="3" r="1.1" fill="#fff"/></svg></div><div class="c1">168,675</div><div class="c2">-58,800</div><div class="c3">23,123</div><div class="c4">18.44</div><div class="c5 b">1.05</div><div class="c6 rd">-1.70</div><div class="c7">1,950</div><div class="c8">1.00</div><div class="c9">1.40</div><div class="c10">7,500</div><div class="c11 s">10950.00</div><div class="c12 y">75</div><div class="c13 y">334.20</div><div class="c14 y">351.55</div><div class="c15 y">75</div><div class="c16 y g">37.50</div><div class="c17 y b">329.40</div><div class="c18 y d">-</div><div class="c19 y">18</div><div class="c20 y d">-</div><div class="c21 y">1,875</div><div class="c22 ic"><svg width="14" height="13"><rect width="14" height="13" fill="#70b540"/><path d="M1 1.5h9M1 3.5h8M1 5.5h6" stroke="#8bc666" stroke-width="1" opacity="0.35"/><path d="M2.5 11.5L4.4 9L5.6 10.3L7.2 7L8.5 8.5L10 5.2L11 3.2" fill="none" stroke="#fff" stroke-width="1.1" stroke-opacity="0.9"/><circle cx="11.2" cy="3" r="1.1" fill="#fff"/></svg></div></div>
<div class="r" style="top:485px"><div class="c0 ic"><svg width="14" height="13"><rect width="14" height="13" fill="#70b540"/><path d="M1 1.5h9M1 3.5h8M1 5.5h6" stroke="#8bc666" stroke-width="1" opacity="0.35"/><path d="M2.5 11.5L4.4 9L5.6 10.3L7.2 7L8.5 8.5L10 5.2L11 3.2" fill="none" stroke="#fff" stroke-width="1.1" stroke-opacity="0.9"/><circle cx="11.2" cy="3" r="1.1" fill="#fff"/></svg></div><div class="c1">715,425</div><div class="c2">-597,825</div><div class="c3">78,099</div><div class="c4">19.58</div><div class="c5 b">1.10</div><div class="c6 rd">-0.60</div><div class="c7">225</div><div class="c8">1.10</div><div class="c9">1.25</div><div class="c10">2,400</div><div class="c11 s">11000.00</div><div class="c12 y">150</div><div class="c13 y">388.10</div><div class="c14 y">392.25</div><div class="c15 y">75</div><div class="c16 y g">41.50</div><div class="c17 y b">388.00</div><div class="c18 y d">-</div><div class="c19 y">505</div><div class="c20 y">-3,225</div><div class="c21 y">11,700</div><div class="c22 ic"><svg width="14" height="13"><rect width="14" height="13" fill="#70b540"/><path d="M1 1.5h9M1 3.5h8M1 5.5h6" stroke="#8bc666" stroke-width="1" opacity="0.35"/><path d="M2.5 11.5L4.4 9L5.6 10.3L7.2 7L8.5 8.5L10 5.2L11 3.2" fill="none" stroke="#fff" stroke-width="1.1" stroke-opacity="0.9"/><circle cx="11.2" cy="3" r="1.1" fill="#fff"/></svg></div></div>
<div class="r" style="top:503px"><div class="c0 ic"><svg width="14" height="13"><rect width="14" height="13" fill="#70b540"/><path d="M1 1.5h9M1 3.5h8M1 5.5h6" stroke="#8bc666" stroke-width="1" opacity="0.35"/><path d="M2.5 11.5L4.4 9L5.6 10.3L7.2 7L8.5 8.5L10 5.2L11 3.2" fill="none" stroke="#fff" stroke-width="1.1" stroke-opacity="0.9"/><circle cx="11.2" cy="3" r="1.1" fill="#fff"/></svg></div><div class="c1">30,000</div><div class="c2">-14,700</div><div class="c3">2,388</div><div class="c4">21.81</div><div class="c5 b">1.00</div><div class="c6 rd">-0.35</div><div class="c7">300</div><div class="c8">0.80</div><div class="c9">1.10</div><div class="c10">600</div><div class="c11 s">11050.00</div><div class="c12 y">1,125</div><div class="c13 y">339.30</div><div class="c14 y">509.10</div><div class="c15 y">1,125</div><div class="c16 y g">44.20</div><div class="c17 y b">424.20</div><div class="c18 y d">-</div><div class="c19 y">1</div><div class="c20 y">75</div><div class="c21 y">75</div><div class="c22 ic"><svg width="14" height="13"><rect width="14" height="13" fill="#70b540"/><path d="M1 1.5h9M1 3.5h8M1 5.5h6" stroke="#8bc666" stroke-width="1" opacity="0.35"/><path d="M2.5 11.5L4.4 9L5.6 10.3L7.2 7L8.5 8.5L10 5.2L11 3.2" fill="none" stroke="#fff" stroke-width="1.1" stroke-opacity="0.9"/><circle cx="11.2" cy="3" r="1.1" fill="#fff"/></svg></div></div>
<div class="r" style="top:521px"><div class="c0 ic"><svg width="14" height="13"><rect width="14" height="13" fill="#70b540"/><path d="M1 1.5h9M1 3.5h8M1 5.5h6" stroke="#8bc666" stroke-width="1" opacity="0.35"/><path d="M2.5 11.5L4.4 9L5.6 10.3L7.2 7L8.5 8.5L10 5.2L11 3.2" fill="none" stroke="#fff" stroke-width="1.1" stroke-opacity="0.9"/><circle cx="11.2" cy="3" r="1.1" fill="#fff"/></svg></div><div class="c1">198,300</div><div class="c2">-29,175</div><div class="c3">22,364</div><div class="c4">23.76</div><div class="c5 b">0.95</div><div class="c6 rd">-0.20</div><div class="c7">7,575</div><div class="c8">0.85</div><div class="c9">0.95</div><div class="c10">450</div><div class="c11 s">11100.00</div><div class="c12 y">75</div><div class="c13 y">484.85</div><div class="c14 y">493.30</div><div class="c15 y">75</div><div class="c16 y g">44.75</div><div class="c17 y b">493.30</div><div class="c18 y d">-</div><div class="c19 y">12</div><div class="c20 y">75</div><div class="c21 y">2,325</div><div class="c22 ic"><svg width="14" height="13"><rect width="14" height="13" fill="#70b540"/><path d="M1 1.5h9M1 3.5h8M1 5.5h6" stroke="#8bc666" stroke-width="1" opacity="0.35"/><path d="M2.5 11.5L4.4 9L5.6 10.3L7.2 7L8.5 8.5L10 5.2L11 3.2" fill="none" stroke="#fff" stroke-width="1.1" stroke-opacity="0.9"/><circle cx="11.2" cy="3" r="1.1" fill="#fff"/></svg></div></div>
<div class="r" style="top:539px"><div class="c0 ic"><svg width="14" height="13"><rect width="14" height="13" fill="#70b540"/><path d="M1 1.5h9M1 3.5h8M1 5.5h6" stroke="#8bc666" stroke-width="1" opacity="0.35"/><path d="M2.5 11.5L4.4 9L5.6 10.3L7.2 7L8.5 8.5L10 5.2L11 3.2" fill="none" stroke="#fff" stroke-width="1.1" stroke-opacity="0.9"/><circle cx="11.2" cy="3" r="1.1" fill="#fff"/></svg></div><div class="c1">37,425</div><div class="c2 d">-</div><div class="c3">590</div><div class="c4">25.93</div><div class="c5 b">1.00</div><div class="c6 rd">-0.45</div><div class="c7">150</div><div class="c8">0.85</div><div class="c9">1.05</div><div class="c10">3,000</div><div class="c11 s">11150.00</div><div class="c12 y">1,125</div><div class="c13 y">319.35</div><div class="c14 y">745.15</div><div class="c15 y">1,125</div><div class="c16 y d">-</div><div class="c17 y d">-</div><div class="c18 y d">-</div><div class="c19 y d">-</div><div class="c20 y d">-</div><div class="c21 y d">-</div><div class="c22 ic"><svg width="14" height="13"><rect width="14" height="13" fill="#70b540"/><path d="M1 1.5h9M1 3.5h8M1 5.5h6" stroke="#8bc666" stroke-width="1" opacity="0.35"/><path d="M2.5 11.5L4.4 9L5.6 10.3L7.2 7L8.5 8.5L10 5.2L11 3.2" fill="none" stroke="#fff" stroke-width="1.1" stroke-opacity="0.9"/><circle cx="11.2" cy="3" r="1.1" fill="#fff"/></svg></div></div>
<div class="r" style="top:557px"><div class="c0 ic"><svg width="14" height="13"><rect width="14" height="13" fill="#70b540"/><path d="M1 1.5h9M1 3.5h8M1 5.5h6" stroke="#8bc666" stroke-width="1" opacity="0.35"/><path d="M2.5 11.5L4.4 9L5.6 10.3L7.2 7L8.5 8.5L10 5.2L11 3.2" fill="none" stroke="#fff" stroke-width="1.1" stroke-opacity="0.9"/><circle cx="11.2" cy="3" r="1.1" fill="#fff"/></svg></div><div class="c1">387,300</div><div class="c2">62,100</div><div class="c3">8,786</div><div class="c4">28.03</div><div class="c5 b">0.95</div><div class="c6 rd">-0.25</div><div class="c7">600</div><div class="c8">0.95</div><div class="c9">1.00</div><div class="c10">3,000</div><div class="c11 s">11200.00</div><div class="c12 y">1,125</div><div class="c13 y">349.35</div><div class="c14 y">651.95</div><div class="c15 y">1,125</div><div class="c16 y d">-</div><div class="c17 y d">-</div><div class="c18 y d">-</div><div class="c19 y d">-</div><div class="c20 y d">-</div><div class="c21 y d">-</div><div class="c22 ic"><svg width="14" height="13"><rect width="14" height="13" fill="#70b540"/><path d="M1 1.5h9M1 3.5h8M1 5.5h6" stroke="#8bc666" stroke-width="1" opacity="0.35"/><path d="M2.5 11.5L4.4 9L5.6 10.3L7.2 7L8.5 8.5L10 5.2L11 3.2" fill="none" stroke="#fff" stroke-width="1.1" stroke-opacity="0.9"/><circle cx="11.2" cy="3" r="1.1" fill="#fff"/></svg></div></div>
<div class="r" style="top:575px"><div class="c0 ic"><svg width="14" height="13"><rect width="14" height="13" fill="#70b540"/><path d="M1 1.5h9M1 3.5h8M1 5.5h6" stroke="#8bc666" stroke-width="1" opacity="0.35"/><path d="M2.5 11.5L4.4 9L5.6 10.3L7.2 7L8.5 8.5L10 5.2L11 3.2" fill="none" stroke="#fff" stroke-width="1.1" stroke-opacity="0.9"/><circle cx="11.2" cy="3" r="1.1" fill="#fff"/></svg></div><div class="c1">6,675</div><div class="c2">-2,025</div><div class="c3">231</div><div class="c4">30.52</div><div class="c5 b">0.50</div><div class="c6 rd">-0.70</div><div class="c7">4,650</div><div class="c8">0.20</div><div class="c9">0.50</div><div class="c10">975</div><div class="c11 s">11250.00</div><div class="c12 y">1,125</div><div class="c13 y">379.35</div><div class="c14 y">885.10</div><div class="c15 y">1,125</div><div class="c16 y d">-</div><div class="c17 y d">-</div><div class="c18 y d">-</div><div class="c19 y d">-</div><div class="c20 y d">-</div><div class="c21 y d">-</div><div class="c22 ic"><svg width="14" height="13"><rect width="14" height="13" fill="#70b540"/><path d="M1 1.5h9M1 3.5h8M1 5.5h6" stroke="#8bc666" stroke-width="1" opacity="0.35"/><path d="M2.5 11.5L4.4 9L5.6 10.3L7.2 7L8.5 8.5L10 5.2L11 3.2" fill="none" stroke="#fff" stroke-width="1.1" stroke-opacity="0.9"/><circle cx="11.2" cy="3" r="1.1" fill="#fff"/></svg></div></div>
<div class="r" style="top:593px"><div class="c0 ic"><svg width="14" height="13"><rect width="14" height="13" fill="#70b540"/><path d="M1 1.5h9M1 3.5h8M1 5.5h6" stroke="#8bc666" stroke-width="1" opacity="0.35"/><path d="M2.5 11.5L4.4 9L5.6 10.3L7.2 7L8.5 8.5L10 5.2L11 3.2" fill="none" stroke="#fff" stroke-width="1.1" stroke-opacity="0.9"/><circle cx="11.2" cy="3" r="1.1" fill="#fff"/></svg></div><div class="c1">215,325</div><div class="c2">21,750</div><div class="c3">895</div><div class="c4">32.03</div><div class="c5 b">0.85</div><div class="c6 rd">-0.15</div><div class="c7">75</div><div class="c8">0.55</div><div class="c9">0.85</div><div class="c10">750</div><div class="c11 s">11300.00</div><div class="c12 y">1,125</div><div class="c13 y">409.35</div><div class="c14 y">955.10</div><div class="c15 y">1,125</div><div class="c16 y d">-</div><div class="c17 y d">-</div><div class="c18 y d">-</div><div class="c19 y d">-</div><div class="c20 y d">-</div><div class="c21 y d">-</div><div class="c22 ic"><svg width="14" height="13"><rect width="14" height="13" fill="#70b540"/><path d="M1 1.5h9M1 3.5h8M1 5.5h6" stroke="#8bc666" stroke-width="1" opacity="0.35"/><path d="M2.5 11.5L4.4 9L5.6 10.3L7.2 7L8.5 8.5L10 5.2L11 3.2" fill="none" stroke="#fff" stroke-width="1.1" stroke-opacity="0.9"/><circle cx="11.2" cy="3" r="1.1" fill="#fff"/></svg></div></div>
<div class="r" style="top:611px"><div class="c0 ic"><svg width="14" height="13"><rect width="14" height="13" fill="#70b540"/><path d="M1 1.5h9M1 3.5h8M1 5.5h6" stroke="#8bc666" stroke-width="1" opacity="0.35"/><path d="M2.5 11.5L4.4 9L5.6 10.3L7.2 7L8.5 8.5L10 5.2L11 3.2" fill="none" stroke="#fff" stroke-width="1.1" stroke-opacity="0.9"/><circle cx="11.2" cy="3" r="1.1" fill="#fff"/></svg></div><div class="c1">5,325</div><div class="c2">225</div><div class="c3">416</div><div class="c4">34.21</div><div class="c5 b">1.80</div><div class="c6 g">0.70</div><div class="c7">75</div><div class="c8">0.55</div><div class="c9">1.00</div><div class="c10">5,025</div><div class="c11 s">11350.00</div><div class="c12 y">1,125</div><div class="c13 y">439.35</div><div class="c14 y">1,025.10</div><div class="c15 y">1,125</div><div class="c16 y d">-</div><div class="c17 y d">-</div><div class="c18 y d">-</div><div class="c19 y d">-</div><div class="c20 y d">-</div><div class="c21 y d">-</div><div class="c22 ic"><svg width="14" height="13"><rect width="14" height="13" fill="#70b540"/><path d="M1 1.5h9M1 3.5h8M1 5.5h6" stroke="#8bc666" stroke-width="1" opacity="0.35"/><path d="M2.5 11.5L4.4 9L5.6 10.3L7.2 7L8.5 8.5L10 5.2L11 3.2" fill="none" stroke="#fff" stroke-width="1.1" stroke-opacity="0.9"/><circle cx="11.2" cy="3" r="1.1" fill="#fff"/></svg></div></div>
<div class="r" style="top:629px"><div class="c0 ic"><svg width="14" height="13"><rect width="14" height="13" fill="#70b540"/><path d="M1 1.5h9M1 3.5h8M1 5.5h6" stroke="#8bc666" stroke-width="1" opacity="0.35"/><path d="M2.5 11.5L4.4 9L5.6 10.3L7.2 7L8.5 8.5L10 5.2L11 3.2" fill="none" stroke="#fff" stroke-width="1.1" stroke-opacity="0.9"/><circle cx="11.2" cy="3" r="1.1" fill="#fff"/></svg></div><div class="c1">104,175</div><div class="c2">225</div><div class="c3">1,139</div><div class="c4">36.07</div><div class="c5 b">0.80</div><div class="c6 rd">-0.20</div><div class="c7">1,500</div><div class="c8">0.40</div><div class="c9">0.80</div><div class="c10">4,275</div><div class="c11 s">11400.00</div><div class="c12 y">1,125</div><div class="c13 y">469.30</div><div class="c14 y">1,095.05</div><div class="c15 y">1,125</div><div class="c16 y d">-</div><div class="c17 y d">-</div><div class="c18 y d">-</div><div class="c19 y d">-</div><div class="c20 y d">-</div><div class="c21 y d">-</div><div class="c22 ic"><svg width="14" height="13"><rect width="14" height="13" fill="#70b540"/><path d="M1 1.5h9M1 3.5h8M1 5.5h6" stroke="#8bc666" stroke-width="1" opacity="0.35"/><path d="M2.5 11.5L4.4 9L5.6 10.3L7.2 7L8.5 8.5L10 5.2L11 3.2" fill="none" stroke="#fff" stroke-width="1.1" stroke-opacity="0.9"/><circle cx="11.2" cy="3" r="1.1" fill="#fff"/></svg></div></div>
<div class="r" style="top:647px"><div class="c0 ic"><svg width="14" height="13"><rect width="14" height="13" fill="#70b540"/><path d="M1 1.5h9M1 3.5h8M1 5.5h6" stroke="#8bc666" stroke-width="1" opacity="0.35"/><path d="M2.5 11.5L4.4 9L5.6 10.3L7.2 7L8.5 8.5L10 5.2L11 3.2" fill="none" stroke="#fff" stroke-width="1.1" stroke-opacity="0.9"/><circle cx="11.2" cy="3" r="1.1" fill="#fff"/></svg></div><div class="c1">75</div><div class="c2 d">-</div><div class="c3">94</div><div class="c4">37.86</div><div class="c5 b">0.65</div><div class="c6 g">0.15</div><div class="c7 d">-</div><div class="c8 d">-</div><div class="c9 d">-</div><div class="c10 d">-</div><div class="c11 s">11450.00</div><div class="c12 y">1,125</div><div class="c13 y">499.30</div><div class="c14 y">1,165.05</div><div class="c15 y">1,125</div><div class="c16 y d">-</div><div class="c17 y d">-</div><div class="c18 y d">-</div><div class="c19 y d">-</div><div class="c20 y d">-</div><div class="c21 y d">-</div><div class="c22 ic"><svg width="14" height="13"><rect width="14" height="13" fill="#70b540"/><path d="M1 1.5h9M1 3.5h8M1 5.5h6" stroke="#8bc666" stroke-width="1" opacity="0.35"/><path d="M2.5 11.5L4.4 9L5.6 10.3L7.2 7L8.5 8.5L10 5.2L11 3.2" fill="none" stroke="#fff" stroke-width="1.1" stroke-opacity="0.9"/><circle cx="11.2" cy="3" r="1.1" fill="#fff"/></svg></div></div>
<div class="r" style="top:665px"><div class="c0 ic"><svg width="14" height="13"><rect width="14" height="13" fill="#70b540"/><path d="M1 1.5h9M1 3.5h8M1 5.5h6" stroke="#8bc666" stroke-width="1" opacity="0.35"/><path d="M2.5 11.5L4.4 9L5.6 10.3L7.2 7L8.5 8.5L10 5.2L11 3.2" fill="none" stroke="#fff" stroke-width="1.1" stroke-opacity="0.9"/><circle cx="11.2" cy="3" r="1.1" fill="#fff"/></svg></div><div class="c1">205,050</div><div class="c2">675</div><div class="c3">585</div><div class="c4">39.58</div><div class="c5 b">0.60</div><div class="c6 rd">-0.15</div><div class="c7">5,400</div><div class="c8">0.40</div><div class="c9">0.60</div><div class="c10">2,475</div><div class="c11 s">11500.00</div><div class="c12 y">1,125</div><div class="c13 y">751.05</div><div class="c14 y">969.45</div><div class="c15 y">1,125</div><div class="c16 y d">-</div><div class="c17 y d">-</div><div class="c18 y d">-</div><div class="c19 y d">-</div><div class="c20 y d">-</div><div class="c21 y d">-</div><div class="c22 ic"><svg width="14" height="13"><rect width="14" height="13" fill="#70b540"/><path d="M1 1.5h9M1 3.5h8M1 5.5h6" stroke="#8bc666" stroke-width="1" opacity="0.35"/><path d="M2.5 11.5L4.4 9L5.6 10.3L7.2 7L8.5 8.5L10 5.2L11 3.2" fill="none" stroke="#fff" stroke-width="1.1" stroke-opacity="0.9"/><circle cx="11.2" cy="3" r="1.1" fill="#fff"/></svg></div></div>
<div class="r" style="top:683px"><div class="c0 ic"><svg width="14" height="13"><rect width="14" height="13" fill="#70b540"/><path d="M1 1.5h9M1 3.5h8M1 5.5h6" stroke="#8bc666" stroke-width="1" opacity="0.35"/><path d="M2.5 11.5L4.4 9L5.6 10.3L7.2 7L8.5 8.5L10 5.2L11 3.2" fill="none" stroke="#fff" stroke-width="1.1" stroke-opacity="0.9"/><circle cx="11.2" cy="3" r="1.1" fill="#fff"/></svg></div><div class="c1">3,150</div><div class="c2 d">-</div><div class="c3">2</div><div class="c4">38.00</div><div class="c5 b">0.45</div><div class="c6 rd">-0.05</div><div class="c7">225</div><div class="c8">0.45</div><div class="c9">0.70</div><div class="c10">300</div><div class="c11 s">11550.00</div><div class="c12 y">1,125</div><div class="c13 y">801.05</div><div class="c14 y">1,216.35</div><div class="c15 y">1,125</div><div class="c16 y d">-</div><div class="c17 y d">-</div><div class="c18 y d">-</div><div class="c19 y d">-</div><div class="c20 y d">-</div><div class="c21 y d">-</div><div class="c22 ic"><svg width="14" height="13"><rect width="14" height="13" fill="#70b540"/><path d="M1 1.5h9M1 3.5h8M1 5.5h6" stroke="#8bc666" stroke-width="1" opacity="0.35"/><path d="M2.5 11.5L4.4 9L5.6 10.3L7.2 7L8.5 8.5L10 5.2L11 3.2" fill="none" stroke="#fff" stroke-width="1.1" stroke-opacity="0.9"/><circle cx="11.2" cy="3" r="1.1" fill="#fff"/></svg></div></div>
<div class="r" style="top:701px"><div class="c0 ic"><svg width="14" height="13"><rect width="14" height="13" fill="#70b540"/><path d="M1 1.5h9M1 3.5h8M1 5.5h6" stroke="#8bc666" stroke-width="1" opacity="0.35"/><path d="M2.5 11.5L4.4 9L5.6 10.3L7.2 7L8.5 8.5L10 5.2L11 3.2" fill="none" stroke="#fff" stroke-width="1.1" stroke-opacity="0.9"/><circle cx="11.2" cy="3" r="1.1" fill="#fff"/></svg></div><div class="c1">7,950</div><div class="c2">375</div><div class="c3">124</div><div class="c4">43.23</div><div class="c5 b">0.35</div><div class="c6 rd">-0.55</div><div class="c7">1,125</div><div class="c8">0.35</div><div class="c9">0.65</div><div class="c10">7,500</div><div class="c11 s">11600.00</div><div class="c12 y">1,050</div><div class="c13 y">606.05</div><div class="c14 y">1,075.90</div><div class="c15 y">1,050</div><div class="c16 y d">-</div><div class="c17 y d">-</div><div class="c18 y d">-</div><div class="c19 y d">-</div><div class="c20 y d">-</div><div class="c21 y d">-</div><div class="c22 ic"><svg width="14" height="13"><rect width="14" height="13" fill="#70b540"/><path d="M1 1.5h9M1 3.5h8M1 5.5h6" stroke="#8bc666" stroke-width="1" opacity="0.35"/><path d="M2.5 11.5L4.4 9L5.6 10.3L7.2 7L8.5 8.5L10 5.2L11 3.2" fill="none" stroke="#fff" stroke-width="1.1" stroke-opacity="0.9"/><circle cx="11.2" cy="3" r="1.1" fill="#fff"/></svg></div></div>
<div class="r" style="top:719px"><div class="c0 ic"><svg width="14" height="13"><rect width="14" height="13" fill="#70b540"/><path d="M1 1.5h9M1 3.5h8M1 5.5h6" stroke="#8bc666" stroke-width="1" opacity="0.35"/><path d="M2.5 11.5L4.4 9L5.6 10.3L7.2 7L8.5 8.5L10 5.2L11 3.2" fill="none" stroke="#fff" stroke-width="1.1" stroke-opacity="0.9"/><circle cx="11.2" cy="3" r="1.1" fill="#fff"/></svg></div><div class="c1 d">-</div><div class="c2 d">-</div><div class="c3">50</div><div class="c4">46.05</div><div class="c5 b">0.45</div><div class="c6 d">-</div><div class="c7 d">-</div><div class="c8 d">-</div><div class="c9 d">-</div><div class="c10 d">-</div><div class="c11 s">11650.00</div><div class="c12 y">1,050</div><div class="c13 y">851.35</div><div class="c14 y">1,251.35</div><div class="c15 y">1,050</div><div class="c16 y d">-</div><div class="c17 y d">-</div><div class="c18 y d">-</div><div class="c19 y d">-</div><div class="c20 y d">-</div><div class="c21 y d">-</div><div class="c22 ic"><svg width="14" height="13"><rect width="14" height="13" fill="#70b540"/><path d="M1 1.5h9M1 3.5h8M1 5.5h6" stroke="#8bc666" stroke-width="1" opacity="0.35"/><path d="M2.5 11.5L4.4 9L5.6 10.3L7.2 7L8.5 8.5L10 5.2L11 3.2" fill="none" stroke="#fff" stroke-width="1.1" stroke-opacity="0.9"/><circle cx="11.2" cy="3" r="1.1" fill="#fff"/></svg></div></div>
</div></body></html>
